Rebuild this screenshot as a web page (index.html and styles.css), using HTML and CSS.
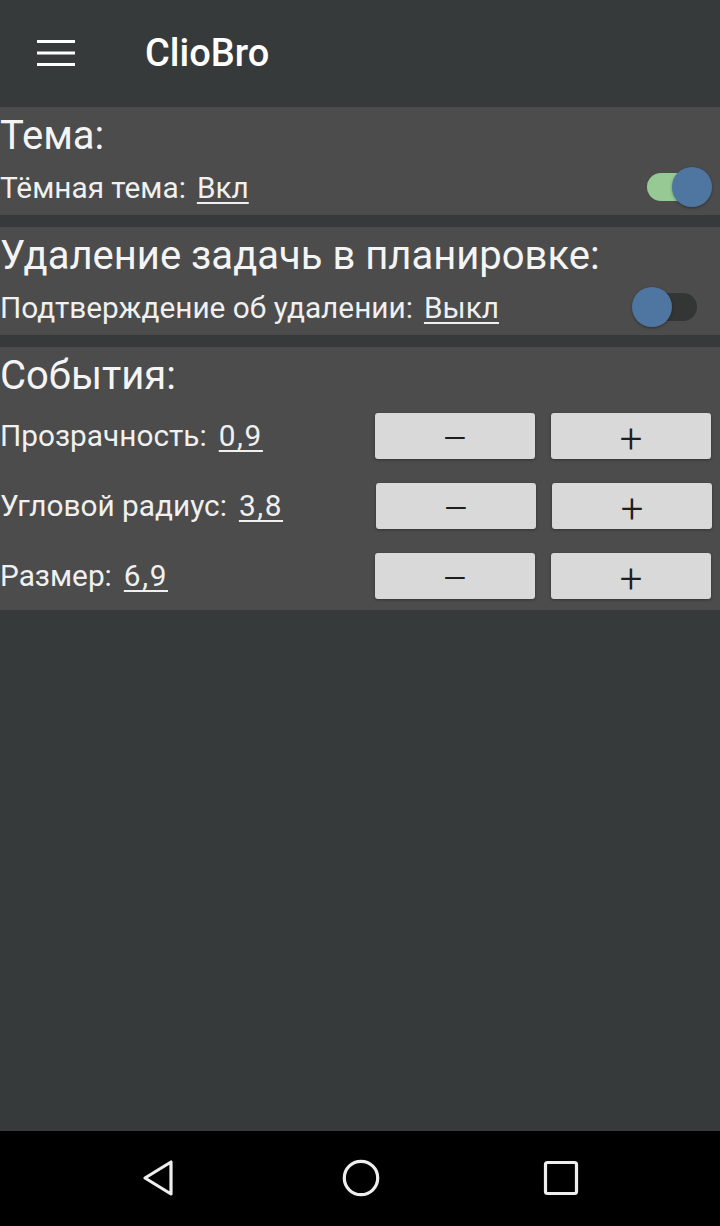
FILE: index.html
```html
<!DOCTYPE html>
<html lang="ru">
<head>
<meta charset="utf-8">
<title>ClioBro</title>
<link rel="stylesheet" href="styles.css">
</head>
<body>
<div class="screen">
  <header class="appbar">
    <svg class="menu-icon" width="38" height="28" viewBox="0 0 38 28">
      <rect x="0" y="1" width="38" height="3" fill="#fff"/>
      <rect x="0" y="12.5" width="38" height="3" fill="#fff"/>
      <rect x="0" y="24" width="38" height="3" fill="#fff"/>
    </svg>
    <div class="app-title">ClioBro</div>
  </header>

  <main class="content">
    <section class="card">
      <div class="card-title">Тема:</div>
      <div class="row">
        <span class="label">Тёмная тема:</span>
        <span class="value">Вкл</span>
        <span class="switch switch-on"><span class="track"></span><span class="thumb"></span></span>
      </div>
    </section>

    <section class="card">
      <div class="card-title">Удаление задачь в планировке:</div>
      <div class="row">
        <span class="label">Подтверждение об удалении:</span>
        <span class="value">Выкл</span>
        <span class="switch switch-off"><span class="track"></span><span class="thumb"></span></span>
      </div>
    </section>

    <section class="card">
      <div class="card-title">События:</div>
      <div class="row row-step">
        <span class="label">Прозрачность:</span>
        <span class="value value-num">0,9</span>
        <div class="steppers">
          <button class="btn">–</button>
          <button class="btn">+</button>
        </div>
      </div>
      <div class="row row-step">
        <span class="label">Угловой радиус:</span>
        <span class="value value-num">3,8</span>
        <div class="steppers steppers-shift">
          <button class="btn">–</button>
          <button class="btn">+</button>
        </div>
      </div>
      <div class="row row-step">
        <span class="label">Размер:</span>
        <span class="value value-num">6,9</span>
        <div class="steppers">
          <button class="btn">–</button>
          <button class="btn">+</button>
        </div>
      </div>
    </section>
  </main>

  <nav class="navbar">
    <svg width="40" height="44" viewBox="0 0 40 44" class="nav-back">
      <path d="M31 6 L31 38 L5 22 Z" fill="none" stroke="#eeeeee" stroke-width="3.2" stroke-linejoin="round"/>
    </svg>
    <svg width="42" height="42" viewBox="0 0 42 42" class="nav-home">
      <circle cx="21" cy="21" r="16.7" fill="none" stroke="#eeeeee" stroke-width="3.2"/>
    </svg>
    <svg width="38" height="38" viewBox="0 0 38 38" class="nav-recent">
      <rect x="3.5" y="3.5" width="31" height="31" rx="2" fill="none" stroke="#eeeeee" stroke-width="3.2"/>
    </svg>
  </nav>
</div>
</body>
</html>
```

FILE: styles.css
```css
* { box-sizing: border-box; }
html, body {
  margin: 0;
  padding: 0;
  background: #373a3b;
}
body {
  font-family: Roboto, "Noto Sans", sans-serif;
  color: #f2f2f2;
}
.screen {
  width: 720px;
  height: 1226px;
  display: flex;
  flex-direction: column;
  background: #373a3b;
}
.appbar {
  height: 107px;
  flex: none;
  display: flex;
  align-items: center;
  padding-left: 37px;
  padding-bottom: 1px;
}
.menu-icon { display: block; }
.app-title {
  margin-left: 70px;
  font-size: 38px;
  font-weight: 500;
  color: #ffffff;
}
.content {
  flex: 1;
  display: flex;
  flex-direction: column;
  gap: 12px;
}
.card {
  background: #4b4c4b;
  padding-top: 5px;
}
.card-title {
  font-size: 40px;
  line-height: 48px;
  color: #f4f4f4;
}
.row {
  height: 55px;
  display: flex;
  align-items: center;
  font-size: 29.8px;
  padding-bottom: 1px;
}
.row-step {
  height: 70px;
  padding-top: 2px;
}
.label { color: #f0f0f0; }
.value {
  margin-left: 11px;
  text-decoration: underline;
  text-decoration-thickness: 2px;
  text-underline-offset: 4px;
  color: #f0f0f0;
}
.value-num {
  margin-left: 12px;
  letter-spacing: 1.6px;
}
.switch {
  margin-left: auto;
  position: relative;
  height: 40px;
}
.switch-on {
  width: 65px;
  margin-right: 8px;
}
.switch-off {
  width: 65px;
  margin-right: 23px;
}
.track {
  position: absolute;
  top: 6px;
  height: 28px;
  border-radius: 14px;
}
.switch-on .track {
  left: 0;
  width: 46px;
  background: #97c995;
}
.switch-off .track {
  right: 0;
  width: 50px;
  background: #333635;
}
.thumb {
  position: absolute;
  top: 0;
  width: 40px;
  height: 40px;
  border-radius: 50%;
  background: #4f76a1;
  box-shadow: 0 1px 3px rgba(0,0,0,0.35);
}
.switch-on .thumb { right: 0; }
.switch-off .thumb { left: 0; }
.steppers {
  margin-left: auto;
  margin-right: 9px;
  display: flex;
  gap: 16px;
}
.steppers-shift { margin-right: 8px; }
.btn {
  width: 160px;
  height: 46px;
  border: none;
  border-radius: 3px;
  background: #d8d9d8;
  box-shadow: 0 1px 3px rgba(0,0,0,0.35);
  font-family: Roboto, "Noto Sans", sans-serif;
  font-size: 40px;
  font-weight: 300;
  line-height: 46px;
  color: #1e1e1e;
  padding: 4px 0 0 0;
}
.navbar {
  height: 95px;
  flex: none;
  background: #000;
  display: flex;
  align-items: center;
  justify-content: space-between;
  padding: 0 140px 2px 140px;
}
.navbar svg { display: block; }
```
